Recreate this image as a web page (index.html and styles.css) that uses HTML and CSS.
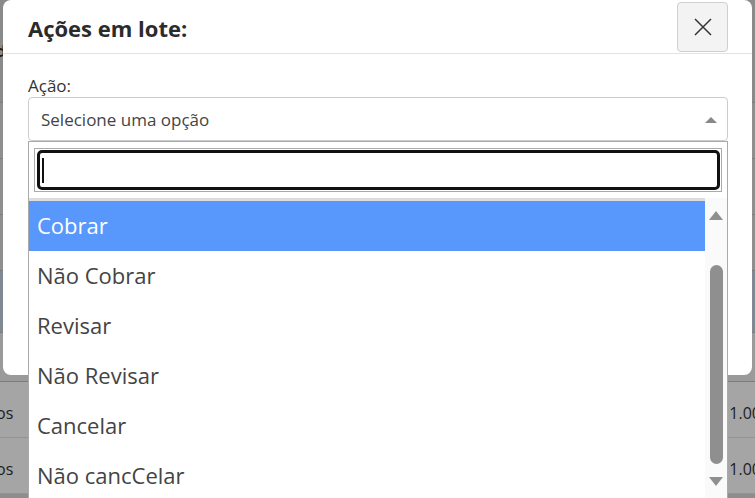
FILE: index.html
```html
<!DOCTYPE html>
<html lang="pt">
<head>
<meta charset="utf-8">
<title>Ações em lote</title>
<link rel="stylesheet" href="styles.css">
</head>
<body>
<div class="backdrop">
  <div class="brow brow-head"><span class="bl bold">d</span><span class="br"></span></div>
  <div class="brow"><span class="bl">i</span><span class="br"></span></div>
  <div class="brow"><span class="bl"></span><span class="br"></span></div>
  <div class="brow"><span class="bl"></span><span class="br"></span></div>
  <div class="brow brow-blue"><span class="bl"></span><span class="br"></span></div>
  <div class="brow brow-dark"><span class="bl"></span><span class="br"></span></div>
  <div class="brow brow-light"><span class="bl">os</span><span class="br">1.00</span></div>
  <div class="brow brow-light"><span class="bl">os</span><span class="br">1.00</span></div>
</div>

<div class="modal">
  <div class="modal-header">
    <h5 class="modal-title">Ações em lote:</h5>
    <button class="close-btn" type="button" aria-label="Fechar">
      <svg width="18" height="18" viewBox="0 0 18 18"><path d="M1 1 L17 17 M17 1 L1 17" stroke="#333" stroke-width="1.5" fill="none"/></svg>
    </button>
  </div>
  <div class="modal-body">
    <div class="field-label">Ação:</div>
    <div class="select-wrap">
      <div class="select-box">
        <span class="select-text">Selecione uma opção</span>
        <span class="select-arrow"></span>
      </div>
      <div class="dropdown">
        <div class="search-wrap">
          <div class="search-field">
            <div class="search-ring"><span class="caret"></span></div>
          </div>
        </div>
        <div class="results">
          <div class="options">
            <div class="opt-prev"></div>
            <div class="opt opt-hl">Cobrar</div>
            <div class="opt">Não Cobrar</div>
            <div class="opt">Revisar</div>
            <div class="opt">Não Revisar</div>
            <div class="opt">Cancelar</div>
            <div class="opt">Não cancCelar</div>
          </div>
          <div class="scrollbar">
            <span class="sb-up"></span>
            <span class="sb-thumb"></span>
            <span class="sb-down"></span>
          </div>
        </div>
      </div>
    </div>
  </div>
</div>
</body>
</html>
```

FILE: styles.css
```css
html, body {
  margin: 0;
  padding: 0;
  width: 755px;
  height: 498px;
  overflow: hidden;
}
body {
  background: #8d8d8d;
  font-family: "Open Sans", "Noto Sans", sans-serif;
  position: relative;
}

/* page behind the modal (dimmed table) */
.backdrop {
  display: flex;
  flex-direction: column;
}
.brow {
  height: 55px;
  border-bottom: 1px solid #7c7c7c;
  display: flex;
  justify-content: space-between;
  align-items: center;
  font-size: 16px;
  color: #1e1e1e;
  background: #8f8f8f;
}
.brow-head { height: 102px; background: #8a8a8a; }
.brow-blue { height: 61px; background: #7f8893; }
.brow-dark { height: 48px; background: #9a9a9a; }
.brow-light {
  background: #a5a5a5;
  border-bottom-color: #939393;
  box-sizing: border-box;
  height: 56px;
  padding-top: 6px;
}
.bl { margin-left: -4px; }
.bold { font-weight: 700; }
.br { margin-right: -6px; }

/* modal */
.modal {
  position: absolute;
  top: 0;
  left: 3px;
  width: 749px;
  height: 375px;
  background: #fff;
  border-radius: 8px;
}
.modal-header {
  height: 54px;
  box-sizing: border-box;
  border-bottom: 1px solid #e3e3e3;
  padding: 0 24px 0 25px;
  display: flex;
  align-items: center;
  justify-content: space-between;
}
.modal-title {
  margin: 2px 0 0 0;
  font-size: 22px;
  font-weight: 700;
  color: #2b2b2b;
}
.close-btn {
  width: 51px;
  height: 50px;
  margin-top: 1px;
  background: #f3f3f3;
  border: 1px solid #cfcfcf;
  border-radius: 4px;
  display: flex;
  align-items: center;
  justify-content: center;
  padding: 0;
}
.modal-body {
  padding: 21px 24px 0 25px;
}
.field-label {
  font-size: 17px;
  line-height: 22px;
  color: #333;
}
.select-wrap {
  position: relative;
}
.select-box {
  height: 44px;
  box-sizing: border-box;
  border: 1px solid #cccccc;
  border-radius: 4px;
  display: flex;
  align-items: center;
  justify-content: space-between;
  padding: 1px 10px 0 12px;
}
.select-text {
  font-size: 17px;
  color: #444;
}
.select-arrow {
  width: 0;
  height: 0;
  border-left: 6px solid transparent;
  border-right: 6px solid transparent;
  border-bottom: 6px solid #888;
}

/* dropdown (overlay) */
.dropdown {
  position: absolute;
  top: 44px;
  left: 0;
  width: 700px;
  box-sizing: border-box;
  border: 1px solid #aaa;
  border-bottom: none;
  background: #fff;
  height: 360px;
  z-index: 2;
}
.search-wrap {
  padding: 6px 5px;
}
.search-field {
  height: 44px;
  box-sizing: border-box;
  border: 1px solid #aaa;
  padding: 1px 1px 1px 2px;
}
.search-ring {
  height: 100%;
  box-sizing: border-box;
  border: 3px solid #111;
  border-radius: 5px;
  padding: 5px 0 0 2px;
}
.caret {
  display: block;
  width: 2px;
  height: 25px;
  background: #111;
}
.results {
  display: flex;
}
.options {
  flex: 1;
}
.opt-prev {
  height: 3px;
  background: #dddddd;
}
.opt {
  height: 50px;
  line-height: 48px;
  padding-left: 8px;
  font-size: 22px;
  color: #444;
}
.opt-hl {
  background: #5897fb;
  color: #fff;
}
.scrollbar {
  width: 22px;
  background: #fafafa;
  display: flex;
  flex-direction: column;
  align-items: center;
  height: 300px;
}
.sb-up {
  margin-top: 13px;
  width: 0;
  height: 0;
  border-left: 7px solid transparent;
  border-right: 7px solid transparent;
  border-bottom: 9px solid #8f8f8f;
}
.sb-thumb {
  margin-top: 45px;
  width: 13px;
  height: 199px;
  background: #8f8f8f;
  border-radius: 7px;
}
.sb-down {
  margin-top: 13px;
  width: 0;
  height: 0;
  border-left: 7px solid transparent;
  border-right: 7px solid transparent;
  border-top: 9px solid #8f8f8f;
}
```
